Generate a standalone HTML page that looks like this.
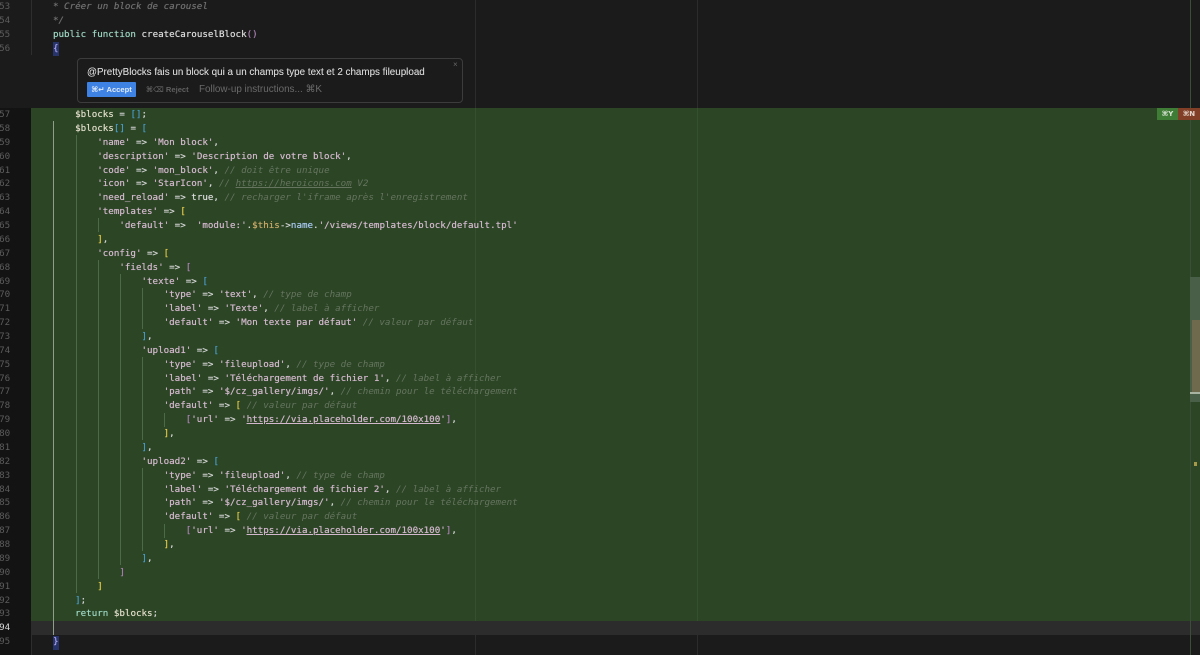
<!DOCTYPE html>
<html><head><meta charset="utf-8">
<style>
html,body{margin:0;padding:0;background:#1b1b1b;}
#r{position:relative;width:1200px;height:655px;overflow:hidden;background:#1b1b1b;filter:blur(.3px);}
.a{position:absolute;}
.l{position:absolute;left:30.84px;margin-top:.6px;height:14px;font:9.2px/14px "DejaVu Sans Mono","Liberation Mono",monospace;white-space:pre;color:#d4d4d4;text-shadow:0 0 .5px currentColor;}
.n{position:absolute;left:-1px;margin-top:.6px;width:11.2px;text-align:right;height:14px;font:9.2px/14px "DejaVu Sans Mono","Liberation Mono",monospace;color:#5c5c5c;}
.s{color:#d3b8cd}.c{color:#66755f;font-style:italic;text-shadow:none}.d{color:#6f6f6f;font-style:italic}.k{color:#9cd4c0}.v{color:#e0dcc8}.w{color:#dcdcdc}
.b{color:#4a9bc8}.y{color:#e0c84a}.p{color:#a97fb0}.u{text-decoration:underline}
.g{position:absolute;width:1px;background:#4b6a47;}
</style></head><body><div id="r">
<div class="a" style="left:0;top:108px;width:31px;height:547px;background:#131313"></div>
<div class="a" style="left:31px;top:108px;width:1169px;height:513px;background:#2b4525"></div>
<div class="a" style="left:31px;top:621px;width:1169px;height:14px;background:#2c2c2c"></div>
<div class="a" style="left:31px;top:0;width:1px;height:55px;background:#2e2e2e"></div>
<div class="a" style="left:31px;top:635px;width:1px;height:20px;background:#2e2e2e"></div>
<div class="a" style="left:475px;top:0;width:1px;height:108px;background:#2c2c2c"></div>
<div class="a" style="left:697px;top:0;width:1px;height:108px;background:#2c2c2c"></div>
<div class="a" style="left:475px;top:108px;width:1px;height:513px;background:#34502f"></div>
<div class="a" style="left:697px;top:108px;width:1px;height:513px;background:#34502f"></div>
<div class="a" style="left:475px;top:635px;width:1px;height:20px;background:#2c2c2c"></div>
<div class="a" style="left:697px;top:635px;width:1px;height:20px;background:#2c2c2c"></div>
<div class="a" style="left:1190px;top:0;width:1px;height:655px;background:#3a4f36"></div>
<div class="a" style="left:1190px;top:277px;width:10px;height:125px;background:#4a5f48"></div>
<div class="a" style="left:1192px;top:320px;width:8px;height:74px;background:#6f6a4e"></div>
<div class="a" style="left:1190px;top:392px;width:10px;height:2px;background:#a9b3a2"></div>
<div class="a" style="left:1194px;top:462px;width:3px;height:4px;background:#a69a4a"></div>
<div class="a" style="left:1157px;top:108px;width:21px;height:12px;background:#3f7d37;color:#d8e4d2;font:bold 7px/12px 'DejaVu Sans',sans-serif;text-align:center">⌘Y</div>
<div class="a" style="left:1178px;top:108px;width:22px;height:12px;background:#813f28;color:#e4d4c8;font:bold 7px/12px 'DejaVu Sans',sans-serif;text-align:center">⌘N</div>

<div class="g" style="left:53px;top:121px;height:514px;background:#8f9d8b"></div>
<div class="g" style="left:76px;top:135px;height:458px"></div>
<div class="g" style="left:98px;top:218px;height:14px"></div>
<div class="g" style="left:98px;top:260px;height:319px"></div>
<div class="g" style="left:120px;top:274px;height:291px"></div>
<div class="g" style="left:142px;top:288px;height:41px"></div>
<div class="g" style="left:142px;top:357px;height:83px"></div>
<div class="g" style="left:142px;top:468px;height:83px"></div>
<div class="g" style="left:164px;top:413px;height:14px"></div>
<div class="g" style="left:164px;top:524px;height:14px"></div>
<div class="a" style="left:53px;top:42px;width:6px;height:14px;background:#27346b"></div>
<div class="a" style="left:53px;top:635.5px;width:6px;height:14px;background:#27346b"></div>

<div class="n" style="top:-1px">53</div><div class="l" style="top:-1px">    <span class="d">* Créer un block de carousel</span></div>
<div class="n" style="top:13px">54</div><div class="l" style="top:13px">    <span class="d">*/</span></div>
<div class="n" style="top:27px">55</div><div class="l" style="top:27px">    <span class="k">public function</span> <span class="w">createCarouselBlock</span><span class="p">()</span></div>
<div class="n" style="top:41px">56</div><div class="l" style="top:41px">    <span style="color:#a9a0e8">{</span></div>

<div class="a" style="left:77px;top:58px;width:384px;height:43px;border:1px solid #3c3c3c;border-radius:4px;background:#1b1b1b"></div>
<div class="a" style="left:87px;top:65.5px;font:9.83px/14px 'Liberation Sans',sans-serif;color:#d2d2d2;white-space:nowrap;text-shadow:0 0 .3px #d2d2d2">@PrettyBlocks fais un block qui a un champs type text et 2 champs fileupload</div>
<div class="a" style="left:453px;top:60px;font:8px/10px 'Liberation Sans',sans-serif;color:#666">×</div>
<div class="a" style="left:87px;top:82px;width:49px;height:15px;background:#3e82e4;border-radius:1px;color:#dfeafa;font:bold 7.6px/15px 'Liberation Sans','DejaVu Sans',sans-serif;text-align:center;white-space:nowrap">⌘↵ Accept</div>
<div class="a" style="left:146px;top:82px;font:bold 7.6px/15px 'Liberation Sans','DejaVu Sans',sans-serif;color:#5f5f5f;white-space:nowrap">⌘⌫ Reject</div>
<div class="a" style="left:199px;top:82.5px;font:9.9px/14px 'Liberation Sans',sans-serif;color:#6a6a6a;white-space:nowrap">Follow-up instructions... ⌘K</div>

<div class="n" style="top:107.5px">57</div><div class="l" style="top:107.5px">        <span class="v">$blocks</span> = <span class="b">[]</span>;</div>
<div class="n" style="top:121.4px">58</div><div class="l" style="top:121.4px">        <span class="v">$blocks</span><span class="b">[]</span> = <span class="b">[</span></div>
<div class="n" style="top:135.2px">59</div><div class="l" style="top:135.2px">            <span class="s">'name'</span> =&gt; <span class="s">'Mon block'</span>,</div>
<div class="n" style="top:149.1px">60</div><div class="l" style="top:149.1px">            <span class="s">'description'</span> =&gt; <span class="s">'Description de votre block'</span>,</div>
<div class="n" style="top:163px">61</div><div class="l" style="top:163px">            <span class="s">'code'</span> =&gt; <span class="s">'mon_block'</span>, <span class="c">// doit être unique</span></div>
<div class="n" style="top:176.9px">62</div><div class="l" style="top:176.9px">            <span class="s">'icon'</span> =&gt; <span class="s">'StarIcon'</span>, <span class="c">// <span class="u">https://heroicons.com</span> V2</span></div>
<div class="n" style="top:190.7px">63</div><div class="l" style="top:190.7px">            <span class="s">'need_reload'</span> =&gt; <span class="w">true</span>, <span class="c">// recharger l'iframe après l'enregistrement</span></div>
<div class="n" style="top:204.6px">64</div><div class="l" style="top:204.6px">            <span class="s">'templates'</span> =&gt; <span class="y">[</span></div>
<div class="n" style="top:218.5px">65</div><div class="l" style="top:218.5px">                <span class="s">'default'</span> =&gt;  <span class="s">'module:'</span>.<span style="color:#c8a868">$this</span>-&gt;<span style="color:#a8c8f0">name</span>.<span class="s">'/views/templates/block/default.tpl'</span></div>
<div class="n" style="top:232.3px">66</div><div class="l" style="top:232.3px">            <span class="y">]</span>,</div>
<div class="n" style="top:246.2px">67</div><div class="l" style="top:246.2px">            <span class="s">'config'</span> =&gt; <span class="y">[</span></div>
<div class="n" style="top:260.1px">68</div><div class="l" style="top:260.1px">                <span class="s">'fields'</span> =&gt; <span class="p">[</span></div>
<div class="n" style="top:274px">69</div><div class="l" style="top:274px">                    <span class="s">'texte'</span> =&gt; <span class="b">[</span></div>
<div class="n" style="top:287.8px">70</div><div class="l" style="top:287.8px">                        <span class="s">'type'</span> =&gt; <span class="s">'text'</span>, <span class="c">// type de champ</span></div>
<div class="n" style="top:301.7px">71</div><div class="l" style="top:301.7px">                        <span class="s">'label'</span> =&gt; <span class="s">'Texte'</span>, <span class="c">// label à afficher</span></div>
<div class="n" style="top:315.6px">72</div><div class="l" style="top:315.6px">                        <span class="s">'default'</span> =&gt; <span class="s">'Mon texte par défaut'</span> <span class="c">// valeur par défaut</span></div>
<div class="n" style="top:329.4px">73</div><div class="l" style="top:329.4px">                    <span class="b">]</span>,</div>
<div class="n" style="top:343.3px">74</div><div class="l" style="top:343.3px">                    <span class="s">'upload1'</span> =&gt; <span class="b">[</span></div>
<div class="n" style="top:357.2px">75</div><div class="l" style="top:357.2px">                        <span class="s">'type'</span> =&gt; <span class="s">'fileupload'</span>, <span class="c">// type de champ</span></div>
<div class="n" style="top:371.1px">76</div><div class="l" style="top:371.1px">                        <span class="s">'label'</span> =&gt; <span class="s">'Téléchargement de fichier 1'</span>, <span class="c">// label à afficher</span></div>
<div class="n" style="top:384.9px">77</div><div class="l" style="top:384.9px">                        <span class="s">'path'</span> =&gt; <span class="s">'$/cz_gallery/imgs/'</span>, <span class="c">// chemin pour le téléchargement</span></div>
<div class="n" style="top:398.8px">78</div><div class="l" style="top:398.8px">                        <span class="s">'default'</span> =&gt; <span class="y">[</span> <span class="c">// valeur par défaut</span></div>
<div class="n" style="top:412.7px">79</div><div class="l" style="top:412.7px">                            <span class="p">[</span><span class="s">'url'</span> =&gt; <span class="s">'<span class="u">https://via.placeholder.com/100x100</span>'</span><span class="p">]</span>,</div>
<div class="n" style="top:426.5px">80</div><div class="l" style="top:426.5px">                        <span class="y">]</span>,</div>
<div class="n" style="top:440.4px">81</div><div class="l" style="top:440.4px">                    <span class="b">]</span>,</div>
<div class="n" style="top:454.3px">82</div><div class="l" style="top:454.3px">                    <span class="s">'upload2'</span> =&gt; <span class="b">[</span></div>
<div class="n" style="top:468.2px">83</div><div class="l" style="top:468.2px">                        <span class="s">'type'</span> =&gt; <span class="s">'fileupload'</span>, <span class="c">// type de champ</span></div>
<div class="n" style="top:482px">84</div><div class="l" style="top:482px">                        <span class="s">'label'</span> =&gt; <span class="s">'Téléchargement de fichier 2'</span>, <span class="c">// label à afficher</span></div>
<div class="n" style="top:495.9px">85</div><div class="l" style="top:495.9px">                        <span class="s">'path'</span> =&gt; <span class="s">'$/cz_gallery/imgs/'</span>, <span class="c">// chemin pour le téléchargement</span></div>
<div class="n" style="top:509.8px">86</div><div class="l" style="top:509.8px">                        <span class="s">'default'</span> =&gt; <span class="y">[</span> <span class="c">// valeur par défaut</span></div>
<div class="n" style="top:523.6px">87</div><div class="l" style="top:523.6px">                            <span class="p">[</span><span class="s">'url'</span> =&gt; <span class="s">'<span class="u">https://via.placeholder.com/100x100</span>'</span><span class="p">]</span>,</div>
<div class="n" style="top:537.5px">88</div><div class="l" style="top:537.5px">                        <span class="y">]</span>,</div>
<div class="n" style="top:551.4px">89</div><div class="l" style="top:551.4px">                    <span class="b">]</span>,</div>
<div class="n" style="top:565.3px">90</div><div class="l" style="top:565.3px">                <span class="p">]</span></div>
<div class="n" style="top:579.1px">91</div><div class="l" style="top:579.1px">            <span class="y">]</span></div>
<div class="n" style="top:593px">92</div><div class="l" style="top:593px">        <span class="b">]</span>;</div>
<div class="n" style="top:606.9px">93</div><div class="l" style="top:606.9px">        <span class="k">return</span> <span class="v">$blocks</span>;</div>
<div class="n" style="top:620.8px;color:#d8d8d8">94</div>
<div class="n" style="top:634.6px">95</div><div class="l" style="top:634.6px">    <span style="color:#a9a0e8">}</span></div>
</div></body></html>
